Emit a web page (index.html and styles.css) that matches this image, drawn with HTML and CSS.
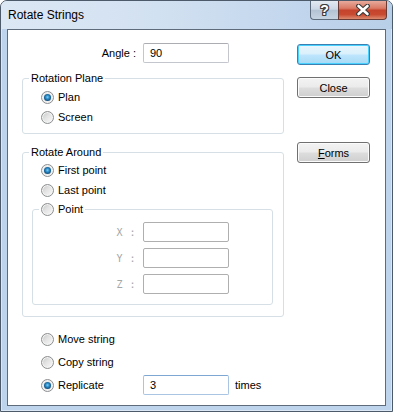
FILE: index.html
```html
<!DOCTYPE html>
<html>
<head>
<meta charset="utf-8">
<title>Rotate Strings</title>
<link rel="stylesheet" href="styles.css">
</head>
<body>
<div class="window">
  <div class="titlebar">
    <span class="title">Rotate Strings</span>
    <div class="caption-btns">
      <div class="cbtn help">?</div>
      <div class="cbtn close">
        <svg width="16" height="12" viewBox="0 0 16 12">
          <path d="M3.5 2 L12.5 10 M12.5 2 L3.5 10" stroke="#3a3a3a" stroke-width="4.8" stroke-linecap="round" fill="none"/>
          <path d="M3.5 2 L12.5 10 M12.5 2 L3.5 10" stroke="#ffffff" stroke-width="2.6" stroke-linecap="round" fill="none"/>
        </svg>
      </div>
    </div>
  </div>
  <div class="client">
    <div class="main">
      <div class="angle-row">
        <span class="angle-lbl">Angle :</span>
        <div class="input">90</div>
      </div>

      <div class="group g-plane">
        <span class="group-title">Rotation Plane</span>
        <div class="radio-row"><span class="radio checked"></span><span>Plan</span></div>
        <div class="radio-row"><span class="radio"></span><span>Screen</span></div>
      </div>

      <div class="group g-around">
        <span class="group-title">Rotate Around</span>
        <div class="radio-row indent"><span class="radio checked"></span><span>First point</span></div>
        <div class="radio-row indent"><span class="radio"></span><span>Last point</span></div>
        <div class="group g-point">
          <div class="radio-row point-title"><span class="radio"></span><span>Point</span></div>
          <div class="coord-row"><span class="coord-lbl">X :</span><div class="input disabled"></div></div>
          <div class="coord-row"><span class="coord-lbl">Y :</span><div class="input disabled"></div></div>
          <div class="coord-row"><span class="coord-lbl">Z :</span><div class="input disabled"></div></div>
        </div>
      </div>

      <div class="options">
        <div class="radio-row"><span class="radio"></span><span>Move string</span></div>
        <div class="radio-row"><span class="radio"></span><span>Copy string</span></div>
        <div class="radio-row"><span class="radio checked"></span><span class="rep-lbl">Replicate</span><div class="input focus">3</div><span class="times">times</span></div>
      </div>
    </div>
    <div class="side">
      <div class="btn default">OK</div>
      <div class="btn btn-close">Close</div>
      <div class="btn btn-forms"><u>F</u>orms</div>
    </div>
  </div>
</div>
</body>
</html>
```
FILE: styles.css
```css
* { box-sizing: border-box; }
html, body { margin: 0; padding: 0; }
body {
  width: 393px;
  height: 412px;
  font-family: "Liberation Sans", Arial, sans-serif;
  font-size: 11px;
  color: #000;
  background: #fff;
}
.window {
  width: 393px;
  height: 412px;
  border: 1px solid #4d5a69;
  border-radius: 7px 7px 0 0;
  background: #bed4ec;
  box-shadow: inset 0 0 0 1px rgba(255,255,255,0.45);
  padding: 0 6px 5px 6px;
  display: flex;
  flex-direction: column;
}
.titlebar {
  height: 28px;
  display: flex;
  align-items: flex-start;
  margin: 0 -6px;
  padding: 0 6px;
  background: linear-gradient(to right, #dce7f4 0%, #d2e1f1 40%, #c2d6ed 75%, #b8cfe8 100%);
  border-radius: 6px 6px 0 0;
}
.title {
  font-size: 12px;
  line-height: 14px;
  padding: 7px 0 0 1px;
  color: #000;
}
.caption-btns {
  margin-left: auto;
  margin-right: -1px;
  display: flex;
}
.cbtn {
  height: 19px;
  border: 1px solid #5d6b7c;
  border-top: none;
  display: flex;
  align-items: center;
  justify-content: center;
}
.help {
  width: 28px;
  border-right: none;
  border-radius: 0 0 0 4px;
  background: linear-gradient(#e3eaf2 0%, #cdd8e5 45%, #b4c3d4 52%, #c6d3e1 100%);
  color: #fff;
  font-weight: bold;
  font-size: 14px;
  line-height: 14px;
  text-shadow: 1px 0 #3d3d3d, -1px 0 #3d3d3d, 0 1px #3d3d3d, 0 -1px #3d3d3d, 1px 1px #3d3d3d, -1px -1px #3d3d3d, 1px -1px #3d3d3d, -1px 1px #3d3d3d;
}
.close {
  width: 49px;
  border-radius: 0 0 4px 0;
  border-color: #6a3a34;
  background: linear-gradient(#e8aa9c 0%, #d97a66 40%, #c5432c 52%, #c84a30 75%, #dc8a70 100%);
}
.client {
  flex: 1;
  border: 1px solid #5e6b7a;
  background: #fff;
  display: flex;
}
.main {
  width: 276px;
  padding-left: 14px;
  display: flex;
  flex-direction: column;
}
.angle-row {
  margin-top: 13px;
  height: 20px;
  display: flex;
  align-items: center;
}
.angle-lbl {
  width: 114px;
  text-align: right;
  margin-right: 7px;
}
.input {
  width: 86px;
  height: 20px;
  border: 1px solid #c3c7cd;
  border-top-color: #abadb3;
  border-radius: 2px;
  padding-left: 6px;
  line-height: 18px;
  background: #fff;
}
.input.disabled {
  border-color: #afafaf;
}
.input.focus {
  border-color: #a9c5e3;
  border-top-color: #7fa7d3;
}
.group {
  position: relative;
  border: 1px solid #d5dfe5;
  border-radius: 3px;
}
.group-title {
  position: absolute;
  top: -8px;
  left: 6px;
  line-height: 14px;
  padding: 0 2px;
  background: #fff;
}
.g-plane {
  margin-top: 15px;
  height: 56px;
  padding: 8px 0 6px 18px;
}
.radio-row {
  height: 20px;
  display: flex;
  align-items: center;
  gap: 4px;
}
.radio {
  position: relative;
  width: 13px;
  height: 13px;
  flex: none;
  border-radius: 50%;
  border: 1px solid #8c8e90;
  background: linear-gradient(135deg, #c4c5c6 0%, #e3e3e3 45%, #fbfbfb 100%);
  box-shadow: inset 0 0 0 1px #f4f4f4;
}
.radio.checked {
  background: radial-gradient(circle at 50% 50%, #f6f6f6 0, #e0e0e0 100%);
}
.radio.checked::after {
  content: "";
  position: absolute;
  left: 2px;
  top: 2px;
  width: 7px;
  height: 7px;
  border-radius: 50%;
  background: radial-gradient(circle at 50% 45%, #7fd0f5 0, #2b8ac6 35%, #0f4f80 70%, #0a2f4f 100%);
}
.g-around {
  margin-top: 18px;
  height: 165px;
  padding: 7px 10px 11px 9px;
}
.indent { margin-left: 9px; }
.g-point {
  margin-top: 9px;
  height: 96px;
  padding: 12px 0 10px 0;
}
.point-title {
  position: absolute;
  top: -11px;
  left: 6px;
  padding: 0 2px;
  background: #fff;
}
.coord-row {
  height: 20px;
  display: flex;
  align-items: center;
  margin-bottom: 6px;
}
.coord-row:last-child { margin-bottom: 0; }
.coord-lbl {
  width: 103px;
  margin-right: 7px;
  text-align: right;
  color: #a6a6a6;
  font-family: "DejaVu Sans Mono", "Liberation Mono", monospace;
  font-size: 10px;
  letter-spacing: 0.5px;
}
.options {
  margin-top: 12px;
  display: flex;
  flex-direction: column;
  gap: 3px;
  padding-left: 19px;
}
.rep-lbl {
  width: 81px;
}
.times {
  margin-left: 2px;
}
.side {
  margin-left: 13px;
  padding-top: 14px;
  display: flex;
  flex-direction: column;
}
.btn {
  width: 73px;
  height: 21px;
  border: 1px solid #707070;
  border-radius: 3px;
  background: linear-gradient(#f3f3f3 0%, #ebebeb 48%, #dddddd 52%, #cfcfcf 100%);
  box-shadow: inset 0 0 0 1px #fbfbfb;
  display: flex;
  align-items: center;
  justify-content: center;
  line-height: 14px;
}
.btn.default {
  border-color: #3c7fb1;
  background: linear-gradient(#eaf6fd 0%, #d9f0fc 48%, #bee6fd 52%, #a7d9f5 100%);
  box-shadow: inset 0 0 0 1px #48d1ff;
}
.btn-close { margin-top: 12px; }
.btn-forms { margin-top: 44px; }
.btn u { text-decoration: underline; text-underline-offset: 1px; }
```
